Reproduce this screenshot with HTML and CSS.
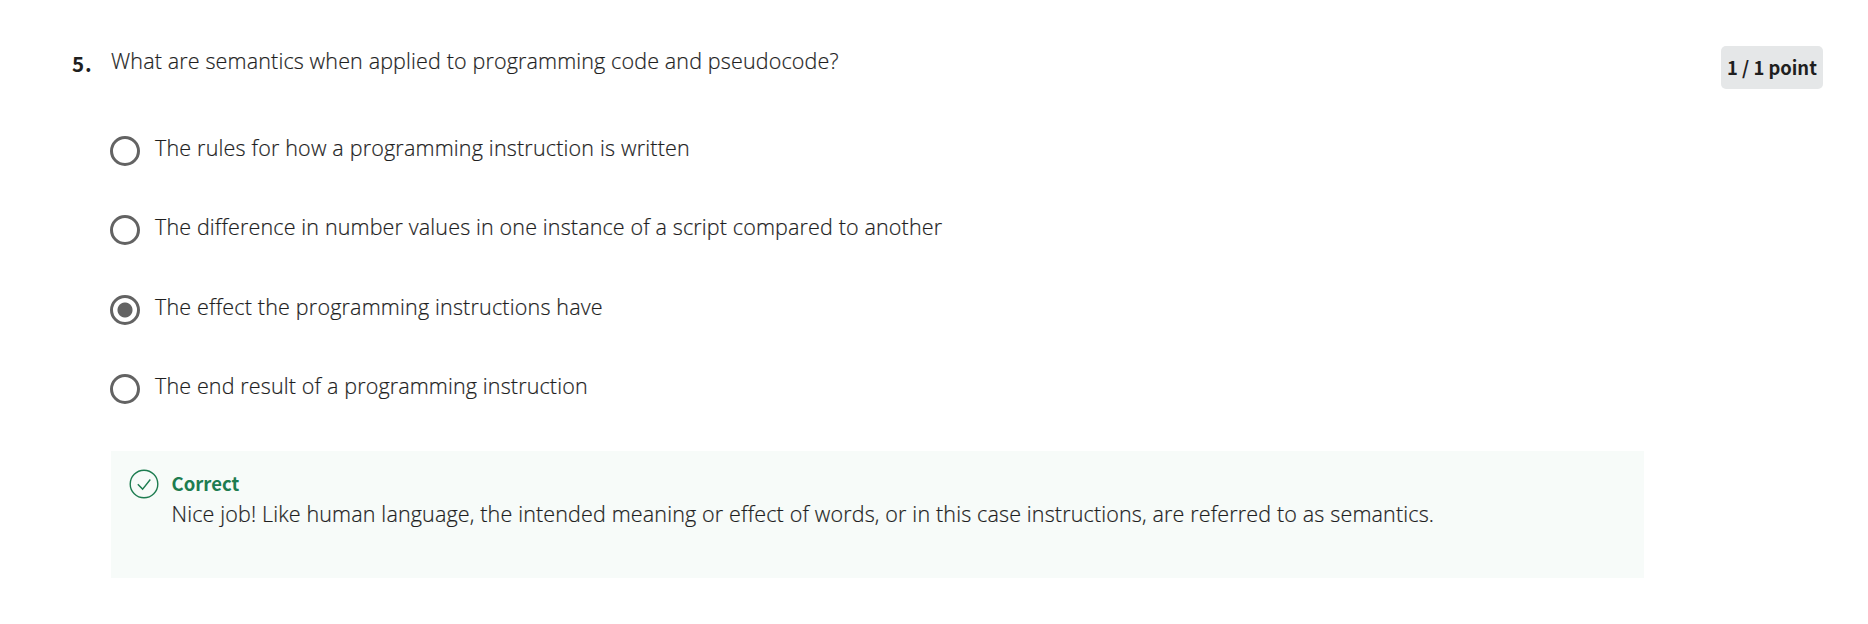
FILE: index.html
```html
<!DOCTYPE html>
<html lang="en"><head><meta charset="utf-8"><title>Quiz question</title><link rel="stylesheet" href="styles.css"></head>
<body>
<main class="question">
<span class="number">5.</span>
<section class="content">
<h1 class="prompt">What are semantics when applied to programming code and pseudocode?</h1>
<div class="options">
<div class="option"><span class="radio"></span><span class="label spaced">The rules for how a programming instruction is written</span></div>
<div class="option"><span class="radio"></span><span class="label">The difference in number values in one instance of a script compared to another</span></div>
<div class="option"><span class="radio checked"></span><span class="label spaced">The effect the programming instructions have</span></div>
<div class="option"><span class="radio"></span><span class="label">The end result of a programming instruction</span></div>
</div>
<div class="feedback">
<svg class="check" viewBox="0 0 30 30" fill="none" stroke="#1d7c50" stroke-width="1.4"><circle cx="15" cy="15" r="13.8"/><path d="M8.8 15.3l4.8 4.8 7.7-9.6"/></svg>
<div><div class="verdict">Correct</div><div class="message">Nice job! Like human language, the intended meaning or effect of words, or in this case instructions, are referred to as semantics.</div></div>
</div>
</section>
<span class="points">1 / 1 point</span>
</main>
</body></html>
```
FILE: styles.css
```css
* { box-sizing: border-box; }
body { margin: 0; background: #fff; color: #1f1f1f; font: 300 21.5px/30px "Open Sans", sans-serif; white-space: nowrap; letter-spacing: 0.14px; -webkit-text-stroke: 0.2px currentColor; }
.question { display: flex; align-items: flex-start; padding: 46px 45px 0 72px; }
.number { width: 39px; padding-top: 2px; font: 700 20.5px/30px "Noto Sans CJK SC", sans-serif; letter-spacing: 0.8px; -webkit-text-stroke: 0; }
.content { width: 1533px; }
.prompt { margin: 0; font: inherit; }
.options { padding-top: 47px; }
.option { display: flex; height: 79.4px; }
.radio { width: 30px; height: 30px; margin: 13px 15.5px 0 -1.5px; border: 3px solid #636363; border-radius: 50%; }
.checked { background: radial-gradient(circle, #636363 7px, transparent 8px); }
.label { padding-top: 10px; }
.spaced { letter-spacing: 0.18px; }
.feedback { display: flex; height: 127px; margin-top: 10.4px; padding: 18px; background: #f7fbf9; }
.check { width: 30px; height: 30px; margin-right: 12.5px; }
.verdict { height: 30px; font: 700 18.5px/28px "Noto Sans CJK SC", sans-serif; letter-spacing: 0; color: #1d7c50; -webkit-text-stroke: 0; }
.message { letter-spacing: 0.15px; }
.points { margin-left: auto; width: 102px; height: 43px; border-radius: 5px; background: #e5e7e8; text-align: center; font: 700 18.4px/43px "Noto Sans CJK SC", sans-serif; letter-spacing: 0; -webkit-text-stroke: 0; }
```
